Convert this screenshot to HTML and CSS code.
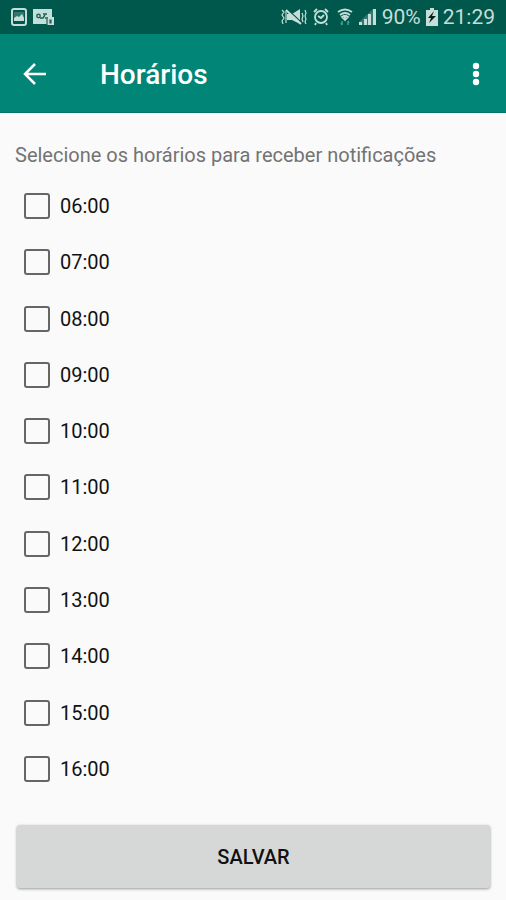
FILE: index.html
```html
<!DOCTYPE html>
<html lang="pt-BR">
<head>
<meta charset="utf-8">
<meta name="viewport" content="width=device-width, initial-scale=1">
<title>Horários</title>
<link rel="stylesheet" href="styles.css">
</head>
<body>
<div class="status">
  <div class="status-group">
    <svg width="16" height="18" viewBox="0 0 16 18" aria-hidden="true"><rect x="1" y="1" width="14" height="16" rx="2" fill="none" stroke="currentColor" stroke-width="2"/><rect x="3" y="4" width="10" height="9" fill="currentColor" opacity=".25"/><path d="M3 13V10l3-2 2 1 3-3 2 4v3z" fill="currentColor"/></svg>
    <svg width="21" height="18" viewBox="0 0 21 18" aria-hidden="true"><path d="M0 1h19v8h2v8h-7v-1H0z" fill="currentColor"/><circle cx="5.5" cy="8" r="1.7" fill="none" stroke="#1d6357" stroke-width="1.4"/><path d="M7 10h3l2-3M10 6h4M12 10h3" fill="none" stroke="#1d6357" stroke-width="1.4"/><path d="M14 17v-6M17 12v3h1v-3z" fill="none" stroke="#1d6357" stroke-width="1.2"/></svg>
  </div>
  <div class="status-group status-right">
    <svg width="26" height="18" viewBox="0 0 26 18" aria-hidden="true"><path d="M6 6h5l8-5v15l-8-4H6z" fill="currentColor"/><path d="M6 1l15 14" stroke="#00574b" stroke-width="1.5"/><path d="M5 2l15 14" stroke="currentColor" stroke-width="2"/><path d="M1 2l2 2-2 3 2 3-2 3 1 3M5 3v12M21 5l1 3-1 3 1 3M24 2l1 3-1 3 1 3-1 3 1 2" fill="none" stroke="currentColor" stroke-width="1.2"/></svg>
    <svg width="18" height="18" viewBox="0 0 18 18" aria-hidden="true"><circle cx="9" cy="9" r="6" fill="none" stroke="currentColor" stroke-width="1.8"/><path d="M2 4l3-3M16 4l-3-3M4 15l-1 2M14 15l1 2M6 8l3 2 3-3" fill="none" stroke="currentColor" stroke-width="1.8"/></svg>
    <svg class="wifi" width="16" height="18" viewBox="0 0 16 18" aria-hidden="true"><path d="M1 4q7-5 14 0M3 7q5-4 10 0M5 9q3-2 6 0L8 12z" fill="none" stroke="currentColor" stroke-width="1.8"/><path d="M6 7h4l-2 5z" fill="currentColor"/><path d="M5 13v4M4 15l1 2M11 17v-4M12 15l-1-2" stroke="#2fae94" stroke-width="1.5"/></svg>
    <svg width="18" height="18" viewBox="0 0 18 18" aria-hidden="true"><path d="M0 17v-3h3v3zM5 17v-6h3v6zM9 17V6h3v11zM14 17V1h3v16z" fill="currentColor"/><path d="M0 14L14 1v16H0z" fill="currentColor" opacity=".25"/></svg>
    <span>90%</span>
    <svg width="12" height="18" viewBox="0 0 12 18" aria-hidden="true"><path d="M0 2h4V0h4v2h4v16H0z" fill="currentColor"/><path d="M8 3L2 10h3l-2 5 7-7H6z" fill="#00231e"/></svg>
    <time>21:29</time>
  </div>
</div>
<header class="appbar">
  <button class="icon-button" type="button" aria-label="Voltar"><svg width="24" height="24" viewBox="0 0 24 24"><path d="M24 12H3M13 2L3 12l10 10" fill="none" stroke="currentColor" stroke-width="2.5"/></svg></button>
  <h1>Horários</h1>
  <button class="icon-button" type="button" aria-label="Mais opções"><svg width="8" height="24" viewBox="0 0 8 24"><circle cx="4" cy="4" r="3.2" fill="currentColor"/><circle cx="4" cy="12" r="3.2" fill="currentColor"/><circle cx="4" cy="20" r="3.2" fill="currentColor"/></svg></button>
</header>
<main>
  <form>
    <p class="intro" id="intro">Selecione os horários para receber notificações</p>
    <div class="times" role="group" aria-labelledby="intro">
      <label><input type="checkbox" name="h" value="06">06:00</label>
      <label><input type="checkbox" name="h" value="07">07:00</label>
      <label><input type="checkbox" name="h" value="08">08:00</label>
      <label><input type="checkbox" name="h" value="09">09:00</label>
      <label><input type="checkbox" name="h" value="10">10:00</label>
      <label><input type="checkbox" name="h" value="11">11:00</label>
      <label><input type="checkbox" name="h" value="12">12:00</label>
      <label><input type="checkbox" name="h" value="13">13:00</label>
      <label><input type="checkbox" name="h" value="14">14:00</label>
      <label><input type="checkbox" name="h" value="15">15:00</label>
      <label><input type="checkbox" name="h" value="16">16:00</label>
    </div>
    <button class="save" type="button">SALVAR</button>
  </form>
</main>
</body>
</html>
```
FILE: styles.css
```css
* {
  box-sizing: border-box;
}

body {
  margin: 0;
  min-height: 100vh;
  display: flex;
  flex-direction: column;
  background: #fafafa;
  color: #111;
  font-family: Roboto, "Liberation Sans", sans-serif;
}

svg {
  display: block;
}

.status {
  height: 34px;
  padding: 0 11px;
  display: flex;
  align-items: center;
  justify-content: space-between;
  background: #00574b;
  color: #c5ded9;
  font-size: 21px;
  line-height: 34px;
}

.status-group {
  display: flex;
  align-items: center;
  gap: 6px;
}

.status-group .wifi {
  margin: 0 1px 0 2px;
}

.status-right {
  gap: 5px;
}

.appbar {
  height: 79px;
  padding: 2px 16px 0 12px;
  display: flex;
  align-items: center;
  background: #008577;
  border-bottom: 1px solid #007468;
  color: #fff;
}

.appbar h1 {
  flex: 1;
  margin: 0 0 0 44px;
  padding-top: 2px;
  font-size: 28px;
  line-height: 32px;
  font-weight: 500;
}

.icon-button {
  min-width: 28px;
  height: 48px;
  padding: 0 10px;
  border: 0;
  background: none;
  color: inherit;
}

main,
form {
  flex: 1;
  display: flex;
  flex-direction: column;
}

form {
  padding: 28px 16px 12px;
}

.intro {
  margin: 0 0 9px -1px;
  color: #737373;
  font-size: 20px;
  line-height: 28px;
}

.times {
  flex: 1;
  display: grid;
  grid-auto-rows: 1fr;
  margin-bottom: 28px;
}

label {
  display: flex;
  align-items: center;
  gap: 10px;
  min-height: 48px;
  padding-left: 8px;
  font-size: 20px;
  line-height: 24px;
}

input {
  appearance: none;
  width: 26px;
  height: 26px;
  margin: 0;
  border: 2px solid #666;
  border-radius: 3px;
}

input:checked {
  border-color: #008577;
  background: #008577;
}

.save {
  height: 63px;
  padding: 0;
  margin: 0 0 0 1px;
  border: 0;
  border-radius: 3px;
  background: #d6d8d7;
  box-shadow: 0 1px 3px rgba(0, 0, 0, 0.4);
  color: #111;
  font: 500 20px/24px Roboto, "Liberation Sans", sans-serif;
}
```
